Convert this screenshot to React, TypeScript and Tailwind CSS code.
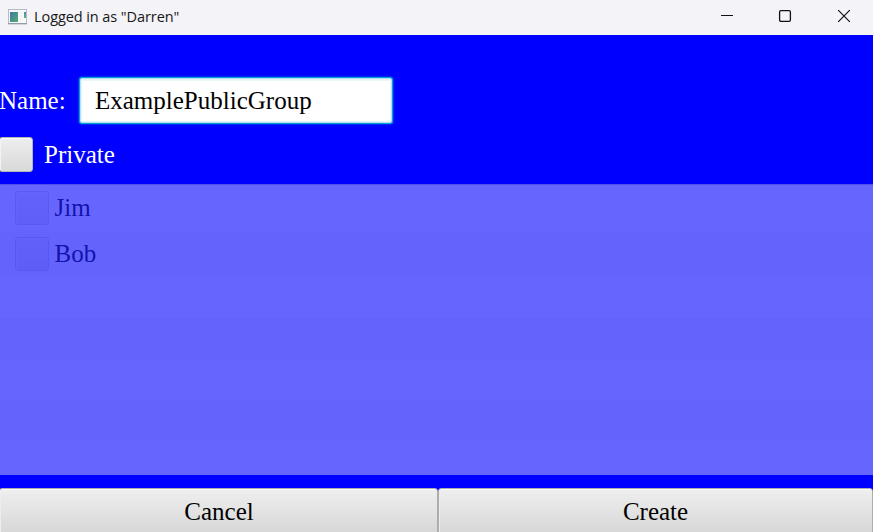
import { useState } from "react";

const users = ["Jim", "Bob"];
const fillerRows = ["h-[41px] bg-white", "h-[41px] bg-[#f9f9f9]", "h-[41px] bg-white", "h-[41px] bg-[#f9f9f9]", "h-[34px] bg-white"];

function AppIcon() {
  return (
    <svg width="20" height="17" viewBox="0 0 20 17" className="-mt-px shrink-0">
      <defs>
        <linearGradient id="pane" x1="0" y1="0" x2="1" y2="1">
          <stop offset="0" stopColor="#3f78a4" />
          <stop offset="1" stopColor="#55ad72" />
        </linearGradient>
        <linearGradient id="bar" x1="0" y1="0" x2="0" y2="1">
          <stop offset="0" stopColor="#5484b5" />
          <stop offset="1" stopColor="#59b67a" />
        </linearGradient>
      </defs>
      <rect x="0.5" y="0.5" width="18" height="14.5" fill="#f7f8f9" stroke="#b4b9c3" />
      <path d="M0 14.5H19" stroke="#949bab" />
      <rect x="2" y="3" width="8" height="10" fill="url(#pane)" />
      <path d="M12 4H14M12 7H14M12 10H14" stroke="#e9e9e9" />
      <rect x="16" y="3" width="2" height="6" fill="url(#bar)" />
    </svg>
  );
}

function TitleBar() {
  return (
    <header className="flex h-[35px] shrink-0 items-center bg-[#f3f3f8] pl-2">
      <AppIcon />
      <span className="-mt-[2px] ml-[6px] flex-1 font-['Open_Sans','Noto_Sans',sans-serif] text-[14.5px] leading-5 tracking-[-0.08px] text-[#171717]">
        Logged in as "Darren"
      </span>
      <button aria-label="Minimize" className="flex h-full w-[58px] items-center justify-center pb-[3px]">
        <svg width="14" height="14" viewBox="0 0 14 14"><path d="M1 6.5H13" stroke="#111" strokeWidth="1" /></svg>
      </button>
      <button aria-label="Maximize" className="flex h-full w-[58px] items-center justify-center pb-[3px]">
        <svg width="14" height="14" viewBox="0 0 14 14"><rect x="1.6" y="1.6" width="10.8" height="10.8" rx="1.3" fill="none" stroke="#111" strokeWidth="1.3" /></svg>
      </button>
      <button aria-label="Close" className="flex h-full w-[59px] items-center justify-center pb-[3px]">
        <svg width="14" height="14" viewBox="0 0 14 14"><path d="M1.2 1.2L12.8 12.8M12.8 1.2L1.2 12.8" stroke="#111" strokeWidth="1.2" /></svg>
      </button>
    </header>
  );
}

const checkbox =
  "shrink-0 appearance-none rounded-[3px] border border-[#b5b5b5] bg-linear-to-b from-[#eeeeee] to-[#d9d9d9] shadow-[inset_0_1px_0_#fafafa,inset_1px_0_0_#f3f3f3]";

export default function App() {
  const [name, setName] = useState("ExamplePublicGroup");
  return (
    <div className="flex h-[532px] w-[873px] flex-col overflow-hidden bg-[#0000ff] font-['Liberation_Serif',serif] text-[25px] leading-[29px]">
      <TitleBar />
      <main className="flex min-h-0 flex-1 flex-col">
        <label className="mt-[43px] flex h-[45px] items-center text-white">
          <span className="-ml-px w-[81px]">Name:</span>
          <input
            value={name}
            onChange={(e) => setName(e.target.value)}
            className="h-[45px] w-[312px] rounded-[2px] border border-[#b5e2f0] bg-white px-[14px] text-black shadow-[0_0_0_1px_#039ed3,0_0_2px_1px_#039ed3,inset_0_0_0_1px_#e3f3f8,inset_0_2px_0_0_#edf6f9] outline-none"
          />
        </label>
        <label className="mt-[14px] flex h-[35px] items-center text-white">
          <input type="checkbox" className={`${checkbox} -ml-px h-[35px] w-[34px]`} />
          <span className="ml-[11px]">Private</span>
        </label>
        <section className="mt-[12px] h-[291px] shrink-0 overflow-hidden border-t border-[#c8c8c8] bg-white opacity-40">
          {users.map((user) => (
            <label key={user} className="flex h-[46px] items-center bg-white pl-[15px] text-[#333333] even:bg-[#f9f9f9]">
              <input type="checkbox" disabled className={`${checkbox} h-[34px] w-[34px] opacity-40`} />
              <span className="ml-[5.5px] pb-[2px]">{user}</span>
            </label>
          ))}
          {fillerRows.map((row, i) => (
            <div key={i} className={row} />
          ))}
        </section>
        <footer className="mt-[13px] -ml-px flex h-[48px] shrink-0">
          {["Cancel", "Create"].map((label) => (
            <button
              key={label}
              className="h-full w-[439px] shrink-0 rounded-[3px] border border-[#adadad] bg-linear-to-b from-[#efefef] to-[#d6d6d6] pb-[2px] shadow-[inset_0_1px_0_#fafafa,inset_1px_0_0_#ededed] first:pl-px last:w-[435px]"
            >
              {label}
            </button>
          ))}
        </footer>
      </main>
    </div>
  );
}
